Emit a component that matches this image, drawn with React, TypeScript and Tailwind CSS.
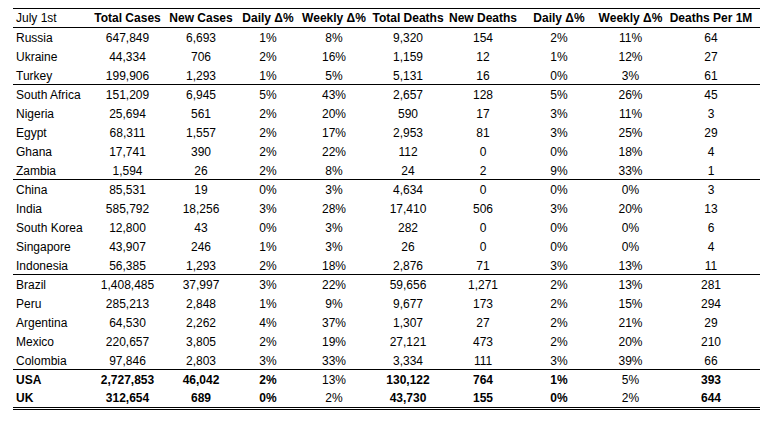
import React from "react";

type Row = string[];

const groups: Row[][] = [
  [
    ["Russia", "647,849", "6,693", "1%", "8%", "9,320", "154", "2%", "11%", "64"],
    ["Ukraine", "44,334", "706", "2%", "16%", "1,159", "12", "1%", "12%", "27"],
    ["Turkey", "199,906", "1,293", "1%", "5%", "5,131", "16", "0%", "3%", "61"],
  ],
  [
    ["South Africa", "151,209", "6,945", "5%", "43%", "2,657", "128", "5%", "26%", "45"],
    ["Nigeria", "25,694", "561", "2%", "20%", "590", "17", "3%", "11%", "3"],
    ["Egypt", "68,311", "1,557", "2%", "17%", "2,953", "81", "3%", "25%", "29"],
    ["Ghana", "17,741", "390", "2%", "22%", "112", "0", "0%", "18%", "4"],
    ["Zambia", "1,594", "26", "2%", "8%", "24", "2", "9%", "33%", "1"],
  ],
  [
    ["China", "85,531", "19", "0%", "3%", "4,634", "0", "0%", "0%", "3"],
    ["India", "585,792", "18,256", "3%", "28%", "17,410", "506", "3%", "20%", "13"],
    ["South Korea", "12,800", "43", "0%", "3%", "282", "0", "0%", "0%", "6"],
    ["Singapore", "43,907", "246", "1%", "3%", "26", "0", "0%", "0%", "4"],
    ["Indonesia", "56,385", "1,293", "2%", "18%", "2,876", "71", "3%", "13%", "11"],
  ],
  [
    ["Brazil", "1,408,485", "37,997", "3%", "22%", "59,656", "1,271", "2%", "13%", "281"],
    ["Peru", "285,213", "2,848", "1%", "9%", "9,677", "173", "2%", "15%", "294"],
    ["Argentina", "64,530", "2,262", "4%", "37%", "1,307", "27", "2%", "21%", "29"],
    ["Mexico", "220,657", "3,805", "2%", "19%", "27,121", "473", "2%", "20%", "210"],
    ["Colombia", "97,846", "2,803", "3%", "33%", "3,334", "111", "3%", "39%", "66"],
  ],
];

const totals: Row[] = [
  ["USA", "2,727,853", "46,042", "2%", "13%", "130,122", "764", "1%", "5%", "393"],
  ["UK", "312,654", "689", "0%", "2%", "43,730", "155", "0%", "2%", "644"],
];

const headers = [
  "July 1st",
  "Total Cases",
  "New Cases",
  "Daily \u0394%",
  "Weekly \u0394%",
  "Total Deaths",
  "New Deaths",
  "Daily \u0394%",
  "Weekly \u0394%",
  "Deaths Per 1M",
];

const gridCols =
  "grid grid-cols-[77px_75px_72px_62px_70px_78px_72px_80px_63px_98px]";

function Cells({ row, boldMask }: { row: Row; boldMask?: boolean[] }) {
  return (
    <>
      {row.map((c, i) => (
        <div
          key={i}
          className={
            (i === 0
              ? "flex justify-start pl-[3px]"
              : "flex justify-center") +
            " whitespace-nowrap " +
            (boldMask && boldMask[i] ? "font-bold" : "")
          }
        >
          {c}
        </div>
      ))}
    </>
  );
}

export default function App() {
  const bold = [true, true, true, true, false, true, true, true, false, true];
  return (
    <div
      className="bg-white w-[776px] h-[423px] text-black text-[12px]"
      style={{ fontFamily: '"Liberation Sans", Arial, sans-serif' }}
    >
      <div className="pt-[8px] pl-[13px]">
        <div className="w-[747px]">
          <div
            className={
              gridCols +
              " h-[20px] leading-[18px] border-t border-b border-black font-bold"
            }
          >
            {headers.map((h, i) => (
              <div
                key={i}
                className={
                  (i === 0
                    ? "flex justify-start pl-[3px] font-normal"
                    : "flex justify-center") + " whitespace-nowrap"
                }
              >
                {h}
              </div>
            ))}
          </div>
          {groups.map((g, gi) => (
            <div key={gi}>
              {g.map((r, ri) => (
                <div
                  key={ri}
                  className={
                    gridCols +
                    (ri === g.length - 1
                      ? " h-[19px] leading-[18px] pt-[1px] border-b border-black overflow-visible"
                      : " h-[19px] leading-[18px] pt-[1px]")
                  }
                >
                  <Cells row={r} />
                </div>
              ))}
            </div>
          ))}
          <div className={gridCols + " h-[19px] leading-[18px] pt-[1px]"}>
            <Cells row={totals[0]} boldMask={bold} />
          </div>
          <div
            className={
              gridCols +
              " h-[21px] leading-[18px] border-b-[3px] border-double border-black"
            }
          >
            <Cells row={totals[1]} boldMask={bold} />
          </div>
        </div>
      </div>
    </div>
  );
}
